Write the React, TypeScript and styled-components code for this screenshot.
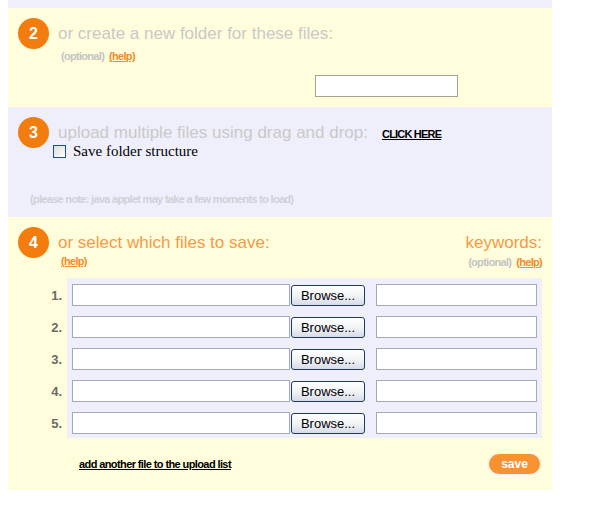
import React from "react";
import styled, { createGlobalStyle } from "styled-components";

const Global = createGlobalStyle`
  html, body { margin: 0; padding: 0; background: #ffffff; }
  body { padding-left: 8px; font-family: "Liberation Sans", Arial, sans-serif; }
`;

const YELLOW = "#fffddc";
const LAVENDER = "#efeffc";
const ORANGE = "#f27c0d";
const NARROW = `"Liberation Sans", Arial, sans-serif`;

const Page = styled.div`
  width: 544px;
  display: flex;
  flex-direction: column;
`;

const TopStrip = styled.div`
  height: 8px;
  background: ${LAVENDER};
`;

const Section = styled.section<{ $bg: string; $h: number }>`
  background: ${(p) => p.$bg};
  height: ${(p) => p.$h}px;
  box-sizing: border-box;
  padding: 10px 10px 0 10px;
  display: flex;
  flex-direction: column;
`;

const Header = styled.div`
  display: flex;
  align-items: center;
  gap: 9px;
`;

const Badge = styled.div`
  width: 31px;
  height: 31px;
  border-radius: 50%;
  background: ${ORANGE};
  color: #fff;
  font: bold 16px "Liberation Sans", Arial, sans-serif;
  display: flex;
  align-items: center;
  justify-content: center;
  flex: none;
`;

const Title = styled.div<{ $active?: boolean }>`
  font-size: 17px;
  line-height: 20px;
  color: ${(p) => (p.$active ? "#f39b48" : "#c9c9c9")};
  white-space: nowrap;
`;

const TitleSpacer = styled.div`
  flex: 1;
`;

const Small = styled.span<{ $tone?: string }>`
  font: bold 11px ${NARROW};
  letter-spacing: -0.7px;
  color: ${(p) => p.$tone ?? "#c4c4c4"};
`;

const HelpLink = styled.a<{ $first?: boolean }>`
  font: bold 11px ${NARROW};
  letter-spacing: -0.7px;
  color: #f28a2a;
  text-decoration: underline;
  margin-left: ${(p) => (p.$first ? 0 : 5)}px;
`;

const BlackLink = styled.a<{ $size?: number }>`
  font: bold ${(p) => p.$size ?? 11}px ${NARROW};
  letter-spacing: ${(p) => (p.$size ? -0.8 : -0.6)}px;
  color: #000;
  text-decoration: underline;
`;

const SubRow = styled.div<{ $ml: number; $mt: number; $right?: boolean }>`
  margin-left: ${(p) => p.$ml}px;
  margin-top: ${(p) => p.$mt}px;
  display: flex;
  align-items: center;
  justify-content: ${(p) => (p.$right ? "space-between" : "flex-start")};
  line-height: 12px;
  height: 12px;
`;

const FolderInput = styled.input`
  margin: 13px 0 0 297px;
  width: 143px;
  height: 22px;
  box-sizing: border-box;
  border: 1px solid #a5a394;
  background: #fff;
  padding: 0 3px;
`;

const CheckRow = styled.label`
  display: flex;
  align-items: center;
  gap: 7px;
  margin: -5px 0 0 35px;
  font: 15px "Liberation Serif", "Times New Roman", serif;
  color: #000;
  line-height: 16px;
`;

const Check = styled.span`
  width: 13px;
  height: 13px;
  box-sizing: border-box;
  border: 1px solid #1c5180;
  background: linear-gradient(135deg, #dcdcd5 0%, #ffffff 100%);
  flex: none;
`;

const Note = styled.div`
  margin: 33px 0 0 12px;
  line-height: 12px;
`;

const ClickGap = styled.span`
  margin-left: 5px;
  padding-top: 1px;
`;

const FileRows = styled.div`
  margin-top: 11px;
  display: flex;
  flex-direction: column;
`;

const FileRow = styled.div`
  display: grid;
  grid-template-columns: 49px 1fr;
  height: 32px;
`;

const Num = styled.div`
  font: bold 13px "Liberation Sans", Arial, sans-serif;
  color: #6a6a6a;
  text-align: right;
  padding-right: 5px;
  padding-top: 10px;
  box-sizing: border-box;
`;

const Cells = styled.div`
  background: ${LAVENDER};
  display: flex;
  align-items: flex-start;
  padding: 6px 5px 0 5px;
  box-sizing: border-box;
`;

const TextBox = styled.input<{ $w: number }>`
  width: ${(p) => p.$w}px;
  height: 22px;
  box-sizing: border-box;
  border: 1px solid #a4a9b8;
  background: #fff;
  margin: 0;
  padding: 0 3px;
`;

const Browse = styled.button`
  width: 74px;
  height: 21px;
  margin: 1px 11px 0 1px;
  box-sizing: border-box;
  border: 1px solid #23395a;
  border-radius: 3px;
  background: linear-gradient(#ffffff 0%, #f2f3f6 50%, #d6dbe6 100%);
  font: 13px "Liberation Sans", Arial, sans-serif;
  color: #000;
  padding: 0;
`;

const Footer = styled.div`
  margin-top: 16px;
  display: flex;
  align-items: center;
  justify-content: space-between;
  padding-left: 61px;
  padding-right: 2px;
`;

const SaveButton = styled.button`
  width: 51px;
  height: 20px;
  border-radius: 10px;
  border: none;
  background: #f7922e;
  color: #fff;
  font: bold 12px "Liberation Sans", Arial, sans-serif;
  padding: 0;
  box-shadow: 0 0 0 1px #f3eef0;
`;

const rows = [1, 2, 3, 4, 5];

export default function App() {
  return (
    <>
      <Global />
      <Page>
        <TopStrip />
        <Section $bg={YELLOW} $h={99}>
          <Header>
            <Badge>2</Badge>
            <Title>or create a new folder for these files:</Title>
          </Header>
          <SubRow $ml={43} $mt={1}>
            <Small>(optional)</Small>
            <HelpLink href="#">(help)</HelpLink>
          </SubRow>
          <FolderInput type="text" />
        </Section>
        <Section $bg={LAVENDER} $h={110}>
          <Header>
            <Badge>3</Badge>
            <Title>upload multiple files using drag and drop:</Title>
            <ClickGap>
              <BlackLink href="#" $size={11}>CLICK HERE</BlackLink>
            </ClickGap>
          </Header>
          <CheckRow>
            <Check />
            Save folder structure
          </CheckRow>
          <Note>
            <Small $tone="#cfcfd6">(please note: java applet may take a few moments to load)</Small>
          </Note>
        </Section>
        <Section $bg={YELLOW} $h={273}>
          <Header>
            <Badge>4</Badge>
            <Title $active>or select which files to save:</Title>
            <TitleSpacer />
            <Title $active>keywords:</Title>
          </Header>
          <SubRow $ml={43} $mt={-3} $right>
            <HelpLink href="#" $first>(help)</HelpLink>
            <span>
              <Small>(optional)</Small>
              <HelpLink href="#">(help)</HelpLink>
            </span>
          </SubRow>
          <FileRows>
            {rows.map((n) => (
              <FileRow key={n}>
                <Num>{n}.</Num>
                <Cells>
                  <TextBox type="text" $w={218} />
                  <Browse type="button">Browse...</Browse>
                  <TextBox type="text" $w={161} />
                </Cells>
              </FileRow>
            ))}
          </FileRows>
          <Footer>
            <BlackLink href="#">add another file to the upload list</BlackLink>
            <SaveButton type="button">save</SaveButton>
          </Footer>
        </Section>
      </Page>
    </>
  );
}
